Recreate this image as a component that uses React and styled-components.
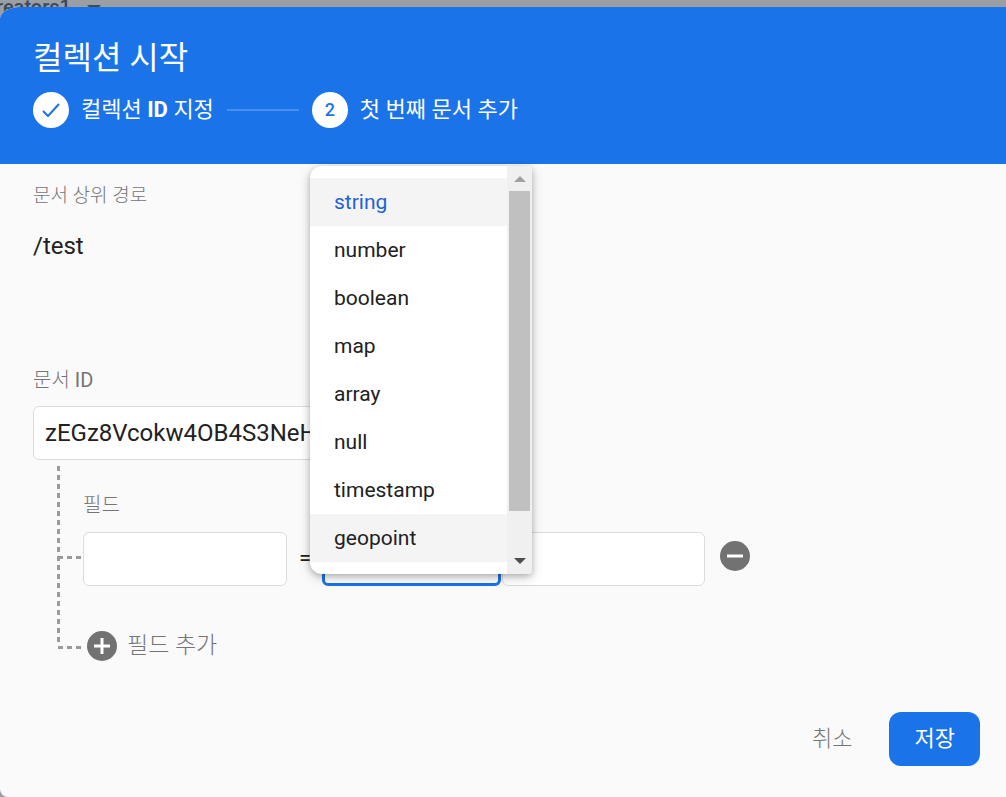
import React, { useState } from "react";
import styled, { createGlobalStyle } from "styled-components";

const GlobalStyle = createGlobalStyle`
    * {
        box-sizing: border-box;
    }
    body {
        margin: 0;
        background: #9b9ea2;
        font-family: Roboto, "Noto Sans CJK KR", sans-serif;
        color: #212121;
        overflow: hidden;
    }
    button, input, select {
        font-family: inherit;
    }
`;

const Page = styled.div`
    display: flex;
    flex-direction: column;
    height: 100vh;
`;

const Backdrop = styled.div`
    display: flex;
    align-items: flex-end;
    gap: 16px;
    height: 7px;
    flex-shrink: 0;
`;

const ProjectName = styled.span`
    align-self: flex-start;
    margin-top: -3px;
    margin-left: -4px;
    font-size: 20px;
    line-height: 20px;
    font-weight: 500;
    color: #3d4a5a;
`;

const Caret = styled.span`
    border: 7px solid transparent;
    border-top-color: #3d4a5a;
    border-bottom: 0;
    margin-bottom: -5px;
`;

const Dialog = styled.main`
    position: relative;
    display: flex;
    flex-direction: column;
    flex: 1;
    background: #fafafa;
    border-radius: 20px 0 0 8px / 12px 0 0 8px;
    overflow: hidden;
`;

const Header = styled.header`
    padding: 27px 33px 36px;
    background: #1a73e8;
    color: white;
`;

const Title = styled.h1`
    margin: 0 0 10px;
    font-size: 32px;
    line-height: 48px;
    font-weight: 400;
`;

const Steps = styled.ol`
    display: flex;
    align-items: center;
    gap: 13px;
    margin: 0;
    padding: 0;
    list-style: none;
`;

const Step = styled.li`
    display: flex;
    align-items: center;
    gap: 12px;
    font-size: 22px;
    line-height: 36px;

    b {
        font-weight: 700;
    }
`;

const StepBadge = styled.span`
    display: flex;
    align-items: center;
    justify-content: center;
    width: 36px;
    height: 36px;
    border-radius: 50%;
    background: white;
    color: #1a73e8;
    font-size: 18px;
    font-weight: 500;
`;

const StepLine = styled.li`
    width: 72px;
    height: 2px;
    background: #4a8fed;
`;

const Form = styled.form`
    display: flex;
    flex-direction: column;
    flex: 1;
    padding: 18px 26px 31px 33px;
`;

const Label = styled.label`
    display: block;
    font-size: ${(props) => (props.$small ? "19px" : "20px")};
    line-height: 28px;
    font-weight: 300;
    color: #757575;

    span {
        font-weight: 400;
    }
`;

const PathValue = styled.output`
    font-size: 24px;
    line-height: 32px;
    margin: 20px 0 104px;
`;

const TextInput = styled.input`
    width: ${(props) => props.$width};
    height: 54px;
    padding: 0 11px;
    border: 1px solid #dcdcdc;
    border-radius: 6px;
    background: white;
    color: #212121;
    font-size: 24px;
`;

const IdInput = styled(TextInput)`
    margin-top: 12px;
`;

const Tree = styled.div`
    display: flex;
    margin: 6px 0 0 24px;
`;

const Branches = styled.svg`
    width: 26px;
    height: 184px;
    flex-shrink: 0;
`;

const Fields = styled.div`
    padding-top: 25px;
`;

const FieldRow = styled.div`
    display: flex;
    align-items: center;
    margin: 13px 0 44px;
`;

const Equals = styled.span`
    width: 35px;
    padding: 0 0 4px 12px;
    font-size: 22px;
`;

const SelectBox = styled.div`
    position: relative;
    width: 179px;
    margin-right: 1px;
`;

const TypeSelect = styled.select`
    display: block;
    width: 100%;
    height: 54px;
    padding: 0 8px;
    border: 3px solid #1a73e8;
    border-radius: 6px;
    background: white;
    color: #212121;
    font-size: 20px;
    outline: none;
`;

const Menu = styled.div`
    position: absolute;
    z-index: 2;
    left: -12px;
    bottom: 12px;
    display: flex;
    width: 222px;
    border-radius: 12px 4px 4px 12px;
    overflow: hidden;
    background: white;
    box-shadow: 0 2px 6px rgba(0, 0, 0, 0.24), 0 4px 14px rgba(0, 0, 0, 0.14);
`;

const Options = styled.ul`
    flex: 1;
    margin: 0;
    padding: 12px 0;
    list-style: none;
`;

const Option = styled.li`
    height: 48px;
    padding-left: 24px;
    font-size: 21px;
    line-height: 48px;
    cursor: pointer;
    color: ${(props) => (props.$selected ? "#1f62d6" : "#212121")};
    background: ${(props) => (props.$selected || props.$active ? "#f4f4f4" : "white")};
`;

const Scrollbar = styled.div`
    display: flex;
    flex-direction: column;
    align-items: center;
    justify-content: space-between;
    width: 25px;
    padding: 10px 0;
    background: #f0f0f0;
`;

const ScrollThumb = styled.div`
    width: 21px;
    height: 320px;
    margin: 9px 0 auto;
    background: #c0c0c0;
`;

const Arrow = styled.span`
    border: 6px solid transparent;
    border-top: ${(props) => (props.$up ? "0" : "6px solid #4d4d4d")};
    border-bottom: ${(props) => (props.$up ? "6px solid #a0a0a0" : "0")};
`;

const IconButton = styled.button`
    display: flex;
    align-items: center;
    gap: 10px;
    padding: 0;
    border: 0;
    background: none;
    color: #757575;
    font-size: 23px;
    line-height: 32px;
    font-weight: 300;
    cursor: pointer;
`;

const RemoveButton = styled(IconButton)`
    margin: 0 0 6px 15px;
`;

const AddButton = styled(IconButton)`
    margin-left: 4px;
`;

const Actions = styled.footer`
    display: flex;
    justify-content: flex-end;
    gap: 11px;
    margin-top: auto;
`;

const ActionButton = styled.button`
    height: 54px;
    padding: 0 25px 6px 26px;
    border: 0;
    border-radius: 12px;
    background: ${(props) => (props.$primary ? "#1a73e8" : "transparent")};
    color: ${(props) => (props.$primary ? "white" : "#757575")};
    font-size: 22px;
    font-weight: ${(props) => (props.$primary ? 400 : 300)};
    cursor: pointer;
`;

const types = ["string", "number", "boolean", "map", "array", "null", "timestamp", "geopoint"];

const RoundIcon = ({ plus }) => (
    <svg width="30" height="30" viewBox="0 0 30 30" aria-hidden="true">
        <circle cx="15" cy="15" r="15" fill="#727272" />
        <path d={plus ? "M7 15h16M15 7v16" : "M7 15h16"} stroke="white" strokeWidth="3" />
    </svg>
);

const App = () => {
    const [type, setType] = useState("string");

    return (
        <Page>
            <GlobalStyle />
            <Backdrop>
                <ProjectName>reators1</ProjectName>
                <Caret />
            </Backdrop>
            <Dialog>
                <Header>
                    <Title>컬렉션 시작</Title>
                    <Steps>
                        <Step>
                            <StepBadge>
                                <svg width="18" height="14" viewBox="0 0 18 14" fill="none" aria-hidden="true">
                                    <path d="M1 8l5 5L17 1" stroke="#1a73e8" strokeWidth="2" />
                                </svg>
                            </StepBadge>
                            <span>컬렉션 <b>ID</b> 지정</span>
                        </Step>
                        <StepLine aria-hidden="true" />
                        <Step aria-current="step">
                            <StepBadge>2</StepBadge>
                            첫 번째 문서 추가
                        </Step>
                    </Steps>
                </Header>
                <Form onSubmit={(e) => e.preventDefault()}>
                    <Label htmlFor="parent-path" $small>문서 상위 경로</Label>
                    <PathValue id="parent-path">/test</PathValue>
                    <Label htmlFor="document-id">문서 <span>ID</span></Label>
                    <IdInput id="document-id" $width="460px" defaultValue="zEGz8Vcokw4OB4S3NeHq" />
                    <Tree>
                        {/* 문서와 필드를 잇는 점선 */}
                        <Branches viewBox="0 0 26 184" fill="none" stroke="#9a9a9a" strokeWidth="3" strokeDasharray="5 4" aria-hidden="true">
                            <path d="M1.5 0V180" />
                            <path d="M1 91.5H25" />
                            <path d="M1 181.5H25" />
                        </Branches>
                        <Fields>
                            <Label htmlFor="field-name">필드</Label>
                            <FieldRow>
                                <TextInput id="field-name" $width="204px" />
                                <Equals>=</Equals>
                                <SelectBox>
                                    <TypeSelect aria-label="유형" value={type} onChange={(e) => setType(e.target.value)}>
                                        {types.map((name) => (
                                            <option key={name}>{name}</option>
                                        ))}
                                    </TypeSelect>
                                    <Menu>
                                        <Options role="listbox" aria-label="유형">
                                            {types.map((name) => (
                                                <Option
                                                    key={name}
                                                    role="option"
                                                    aria-selected={name === type}
                                                    $selected={name === type}
                                                    $active={name === "geopoint"}
                                                    onClick={() => setType(name)}
                                                >
                                                    {name}
                                                </Option>
                                            ))}
                                        </Options>
                                        <Scrollbar aria-hidden="true">
                                            <Arrow $up />
                                            <ScrollThumb />
                                            <Arrow />
                                        </Scrollbar>
                                    </Menu>
                                </SelectBox>
                                <TextInput aria-label="값" $width="203px" />
                                <RemoveButton type="button" aria-label="필드 삭제">
                                    <RoundIcon />
                                </RemoveButton>
                            </FieldRow>
                            <AddButton type="button">
                                <RoundIcon plus />
                                필드 추가
                            </AddButton>
                        </Fields>
                    </Tree>
                    <Actions>
                        <ActionButton type="button">취소</ActionButton>
                        <ActionButton type="submit" $primary>저장</ActionButton>
                    </Actions>
                </Form>
            </Dialog>
        </Page>
    );
};

export default App;
